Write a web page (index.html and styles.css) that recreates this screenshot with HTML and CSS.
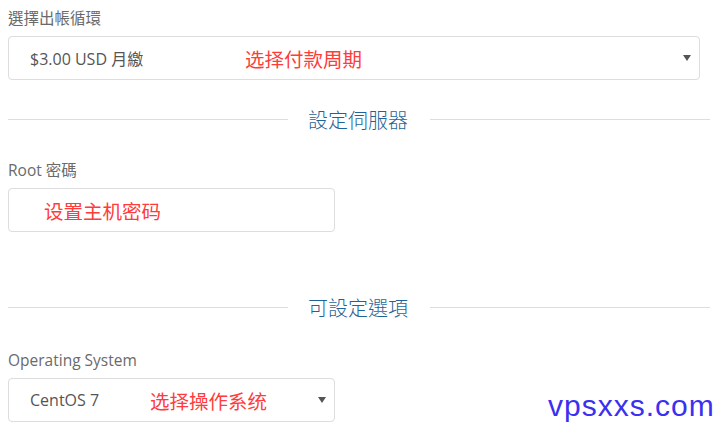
FILE: index.html
```html
<!DOCTYPE html>
<html lang="zh-Hant">
<head>
    <meta charset="UTF-8">
    <title>設定伺服器</title>
    <link rel="stylesheet" href="styles.css">
</head>
<body>
    <div class="order-form">
        <div class="field-label">選擇出帳循環</div>
        <div class="select-box full">
            <span class="value cycle-value">$3.00 USD 月繳</span>
            <span class="note">选择付款周期</span>
            <span class="caret"></span>
        </div>

        <div class="divider divider-first">
            <span class="divider-text">設定伺服器</span>
        </div>

        <div class="field-label">Root 密碼</div>
        <div class="text-box half">
            <span class="note">设置主机密码</span>
        </div>

        <div class="divider divider-second">
            <span class="divider-text">可設定選項</span>
        </div>

        <div class="field-label">Operating System</div>
        <div class="select-box half">
            <span class="value os-value">CentOS 7</span>
            <span class="note">选择操作系统</span>
            <span class="caret"></span>
        </div>
    </div>

    <div class="watermark">vpsxxs.com</div>
</body>
</html>
```

FILE: styles.css
```css
body {
    margin: 0;
    padding: 8px;
    background-color: #fff;
    font-family: "Open Sans", "Noto Sans CJK TC", sans-serif;
    color: #555;
}
.order-form {
    display: flex;
    flex-direction: column;
    width: 702px;
}
.field-label {
    font-size: 15.5px;
    line-height: 20px;
    color: #6a6a6a;
    margin-bottom: 8px;
}
.select-box,
.text-box {
    box-sizing: border-box;
    height: 44px;
    border: 1px solid #ddd;
    border-radius: 4px;
    display: flex;
    align-items: center;
    background-color: #fff;
}
.full {
    width: 692px;
}
.half {
    width: 327px;
}
.select-box {
    padding: 0 7px 0 21px;
}
.text-box {
    padding-left: 35px;
}
.value {
    font-size: 16px;
    color: #555;
}
.cycle-value {
    width: 215px;
}
.os-value {
    width: 120px;
}
.note {
    font-family: "Noto Sans CJK SC", sans-serif;
    font-size: 19.5px;
    color: #ff3b3b;
}
.caret {
    margin-left: auto;
    width: 0;
    height: 0;
    border-left: 4px solid transparent;
    border-right: 4px solid transparent;
    border-top: 6px solid #555;
    margin-right: 1px;
}
.divider {
    display: flex;
    align-items: center;
    height: 20px;
}
.divider::before,
.divider::after {
    content: "";
    flex: 1;
    border-top: 1px solid #ddd;
}
.divider-text {
    font-size: 20px;
    font-weight: 300;
    color: #1f6497;
    padding: 0 22px 0 20px;
}
.divider-first {
    margin: 29px 0 31px;
}
.divider-second {
    margin: 65px 0 33px;
}
.watermark {
    position: absolute;
    left: 548px;
    top: 389px;
    font-family: "Liberation Sans", Arial, sans-serif;
    font-size: 30px;
    letter-spacing: 1px;
    color: #3a30f0;
}
```
